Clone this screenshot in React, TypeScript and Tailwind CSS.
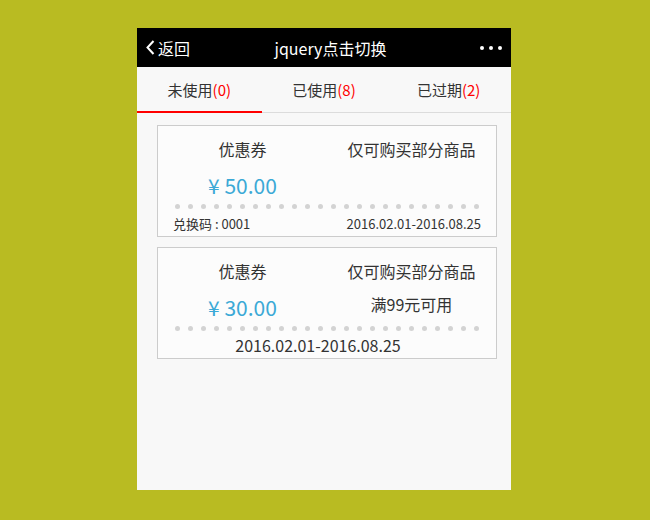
import { useState } from 'react';

const font = { fontFamily: '"Noto Sans CJK SC", "Noto Sans", sans-serif' };

const tabs = [
  { label: '未使用', count: 0 },
  { label: '已使用', count: 8 },
  { label: '已过期', count: 2 },
];

function Dots() {
  return (
    <div className="flex justify-between px-[17px]">
      {Array.from({ length: 24 }).map((_, i) => (
        <span key={i} className="block w-[5px] h-[5px] rounded-full bg-[#d3d3d3]" />
      ))}
    </div>
  );
}

export default function App() {
  const [active, setActive] = useState(0);

  return (
    <div className="min-h-screen bg-[#b9bb22] flex justify-center pt-[28px] pr-[2px]" style={font}>
      <div className="w-[374px] h-[462px] bg-[#f8f8f8] flex flex-col">
        {/* Header */}
        <div className="h-[39px] bg-black flex items-center text-white">
          <div className="w-[64px] flex items-center pl-[9px] gap-[3px]">
            <svg width="9" height="15" viewBox="0 0 9 15">
              <path d="M7.5 1 L1.5 7.5 L7.5 14" fill="none" stroke="white" strokeWidth="2" />
            </svg>
            <span className="text-[16px] leading-none">返回</span>
          </div>
          <div className="flex-1 text-center text-[16px] leading-none">jquery点击切换</div>
          <div className="w-[51px] flex justify-end items-center gap-[5px] pr-[9px]">
            <span className="block w-[4px] h-[4px] rounded-full bg-white" />
            <span className="block w-[4px] h-[4px] rounded-full bg-white" />
            <span className="block w-[4px] h-[4px] rounded-full bg-white" />
          </div>
        </div>

        {/* Tabs */}
        <div className="flex border-b border-[#dcdcdc]">
          {tabs.map((t, i) => (
            <button
              key={t.label}
              onClick={() => setActive(i)}
              className={`flex-1 h-[46px] -mb-px pt-[3px] border-b-2 text-[15px] text-[#333] ${
                active === i ? 'border-[#ff0000]' : 'border-transparent'
              }`}
            >
              {t.label}
              <span className="text-[#ff0000]">({t.count})</span>
            </button>
          ))}
        </div>

        {/* Coupon 1 */}
        <div className="ml-[20px] mt-[12px] w-[340px] h-[112px] border border-[#cccccc] bg-[#fcfcfc] text-[#333]">
          <div className="flex pt-[10px]">
            <div className="flex-1 text-center text-[16px] leading-[26px]">优惠券</div>
            <div className="flex-1 text-center text-[16px] leading-[26px]">仅可购买部分商品</div>
          </div>
          <div className="flex mt-[9px]">
            <div className="flex-1 text-center text-[21px] leading-[28px] text-[#3ba9d6]">¥ 50.00</div>
            <div className="flex-1" />
          </div>
          <div className="mt-[5px]">
            <Dots />
          </div>
          <div className="flex justify-between px-[15px] mt-[6px] text-[13px] leading-[18px]">
            <span>兑换码 : 0001</span>
            <span>2016.02.01-2016.08.25</span>
          </div>
        </div>

        {/* Coupon 2 */}
        <div className="ml-[20px] mt-[10px] w-[340px] h-[112px] border border-[#cccccc] bg-[#fcfcfc] text-[#333]">
          <div className="flex pt-[10px]">
            <div className="flex-1 text-center text-[16px] leading-[26px]">优惠券</div>
            <div className="flex-1 text-center text-[16px] leading-[26px]">仅可购买部分商品</div>
          </div>
          <div className="flex mt-[9px] items-start">
            <div className="flex-1 text-center text-[21px] leading-[28px] text-[#3ba9d6]">¥ 30.00</div>
            <div className="flex-1 text-center text-[16px] leading-[22px]">满99元可用</div>
          </div>
          <div className="mt-[5px]">
            <Dots />
          </div>
          <div className="text-center pr-[18px] mt-[3px] text-[16px] leading-[22px]">2016.02.01-2016.08.25</div>
        </div>
      </div>
    </div>
  );
}
